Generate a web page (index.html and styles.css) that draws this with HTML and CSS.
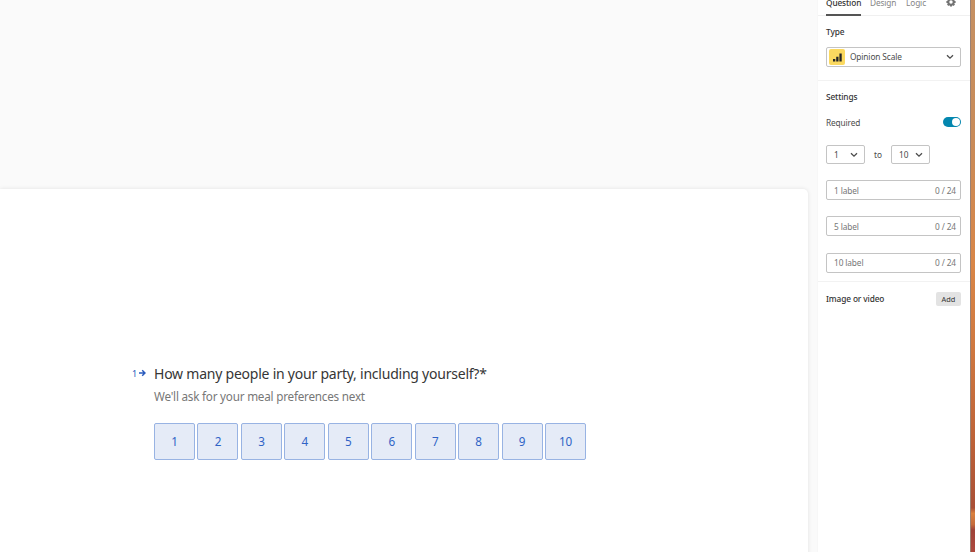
FILE: index.html
```html
<!DOCTYPE html>
<html lang="en">
<head>
<meta charset="utf-8">
<title>Form builder</title>
<link rel="stylesheet" href="styles.css">
</head>
<body>
<div class="app">
  <main class="canvas">
    <section class="card">
      <div class="question">
        <div class="marker"><span>1</span><svg width="7" height="8" viewBox="0 0 7 8"><path d="M0 4h5.6M3.2 1.3 6 4 3.2 6.7" fill="none" stroke="currentColor" stroke-width="1.5"/></svg></div>
        <div class="body">
          <h1>How many people in your party, including yourself?*</h1>
          <p>We'll ask for your meal preferences next</p>
          <div class="scale">
            <button>1</button><button>2</button><button>3</button><button>4</button><button>5</button><button>6</button><button>7</button><button>8</button><button>9</button><button>10</button>
          </div>
        </div>
      </div>
    </section>
  </main>
  <aside class="panel">
    <nav class="tabs">
      <a class="tab active">Question</a><a class="tab design">Design</a><a class="tab logic">Logic</a>
      <svg class="gear" width="10" height="10" viewBox="0 0 10 10"><circle cx="5" cy="5" r="2.7" fill="none" stroke="#737373" stroke-width="2"/><path d="M5 .4v1.8M5 7.8v1.8M.4 5h1.8M7.8 5h1.8M1.7 1.7 3 3M7 7l1.3 1.3M8.3 1.7 7 3M3 7 1.7 8.3" stroke="#737373" stroke-width="2"/></svg>
    </nav>
    <section class="type">
      <h2>Type</h2>
      <div class="field select">
        <span class="badge"><svg width="9" height="9" viewBox="0 0 9 9"><path d="M0 6h2.3v2.6H0zM3.2 3.7h2.3v4.9H3.2zM6.4.5h2.3v8.1H6.4z" fill="#262627"/></svg></span>
        <span class="name">Opinion Scale</span>
        <svg class="chev" width="8" height="6" viewBox="0 0 8 6"><path d="M1 1.2 4 4.2 7 1.2" fill="none" stroke="#4c4c4c" stroke-width="1.3"/></svg>
      </div>
    </section>
    <section class="settings">
      <h2>Settings</h2>
      <div class="required"><span>Required</span><span class="toggle"></span></div>
      <div class="range">
        <div class="field small"><span>1</span><svg width="8" height="6" viewBox="0 0 8 6"><path d="M1 1.2 4 4.2 7 1.2" fill="none" stroke="#4c4c4c" stroke-width="1.3"/></svg></div>
        <span class="to">to</span>
        <div class="field small"><span>10</span><svg width="8" height="6" viewBox="0 0 8 6"><path d="M1 1.2 4 4.2 7 1.2" fill="none" stroke="#4c4c4c" stroke-width="1.3"/></svg></div>
      </div>
      <div class="field label first"><span>1 label</span><span class="count">0 / 24</span></div>
      <div class="field label"><span>5 label</span><span class="count">0 / 24</span></div>
      <div class="field label last"><span>10 label</span><span class="count">0 / 24</span></div>
    </section>
    <section class="media"><h2>Image or video</h2><button class="add">Add</button></section>
  </aside>
  <div class="edge"></div>
</div>
</body>
</html>
```
FILE: styles.css
```css
* { box-sizing: border-box; }
body { margin: 0; overflow: hidden; background: #fafafa; font-family: "Noto Sans", sans-serif; }
h1, h2, p { margin: 0; font-weight: 400; white-space: nowrap; }
button { font-family: inherit; padding: 0; }
svg { display: block; flex: none; }
.app { display: flex; width: 975px; height: 552px; overflow: hidden; }

.canvas { width: 817px; padding: 189px 9.5px 0 0; }
.card { height: 380px; padding: 174px 0 0 132px; background: #fff; border-radius: 0 5px 0 0; box-shadow: 0 0 4px rgba(0, 0, 0, .1); }
.question { display: flex; }
.marker { display: flex; align-items: center; gap: 2px; width: 22px; height: 20px; color: #2a5bbd; font-size: 9px; }
.body h1 { font-size: 14px; line-height: 21px; letter-spacing: -.23px; color: #363636; }
.body p { margin-top: 3px; font-size: 11.7px; line-height: 19px; letter-spacing: -.22px; color: #777; }
.scale { display: grid; grid-template-columns: repeat(10, 1fr); gap: 2.4px; width: 432px; margin-top: 17px; }
.scale button { height: 37px; padding-bottom: 1px; border: 1px solid #98b3e3; border-radius: 2px; background: #e5ebf7; color: #2f63c6; font-size: 11.7px; letter-spacing: -.2px; }

.panel { width: 153px; background: #fff; border-left: 1px solid #f7f7f7; font-size: 8.3px; letter-spacing: -.12px; color: #4c4c4c; }
.panel h2 { font-size: 8.3px; line-height: 12px; color: #333; font-weight: 500; }
.panel section { padding: 0 9px 0 8px; }
.tabs { display: flex; height: 16px; padding: 0 14px 0 8px; border-bottom: 1px solid #f0f0f0; color: #858585; white-space: nowrap; }
.tab { height: 20px; margin-top: -4px; line-height: 13px; }
.tab.active { width: 35px; color: #333; font-weight: 500; border-bottom: 2px solid #555; }
.design { margin-left: 9px; width: 27px; }
.logic { margin-left: 9px; }
.gear { margin: -3px 0 0 auto; }
.type { height: 65px; border-bottom: 1px solid #f2f2f2; }
.type h2 { padding-top: 10px; }
.field { display: flex; align-items: center; justify-content: space-between; height: 20px; border: 1px solid #c4c4c4; border-radius: 2px; background: #fff; white-space: nowrap; }
.select { margin-top: 9px; padding: 0 6px 0 2px; }
.badge { display: flex; align-items: center; justify-content: center; width: 16px; height: 16px; border-radius: 2px; background: #fbd960; }
.name { margin: -1px auto 0 5px; }
.settings { height: 201px; border-bottom: 1px solid #f2f2f2; }
.settings h2 { padding-top: 10px; }
.required { display: flex; align-items: center; justify-content: space-between; height: 12px; margin-top: 13px; }
.toggle { display: flex; justify-content: flex-end; width: 18px; height: 10px; padding: 1px; border-radius: 5px; background: #0487af; }
.toggle::after { content: ""; width: 8px; height: 8px; border-radius: 50%; background: #fff; }
.range { display: flex; align-items: center; margin-top: 17px; }
.small { width: 39px; height: 19px; padding: 0 6px 0 7px; }
.to { width: 26px; text-align: center; }
.label { margin-top: 16px; padding: 0 4px 0 7px; color: #777; }
.label.first { margin-top: 16.4px; }
.label.last { margin-top: 16.6px; }
.media { display: flex; align-items: center; justify-content: space-between; height: 33px; }
.add { width: 25px; height: 14px; border: 0; border-radius: 2px; background: #e3e3e3; color: #333; font-size: 7.4px; }

.edge { width: 5px; border-left: 1px solid #9b8275; background: linear-gradient(#c59062 0%, #c98b59 25%, #d98647 48%, #cf7840 63%, #bd6238 80%, #a94f36 92%, #d9813f 93%, #c56c3c 95%, #9e4338 96%, #ae493e 100%); }
```
